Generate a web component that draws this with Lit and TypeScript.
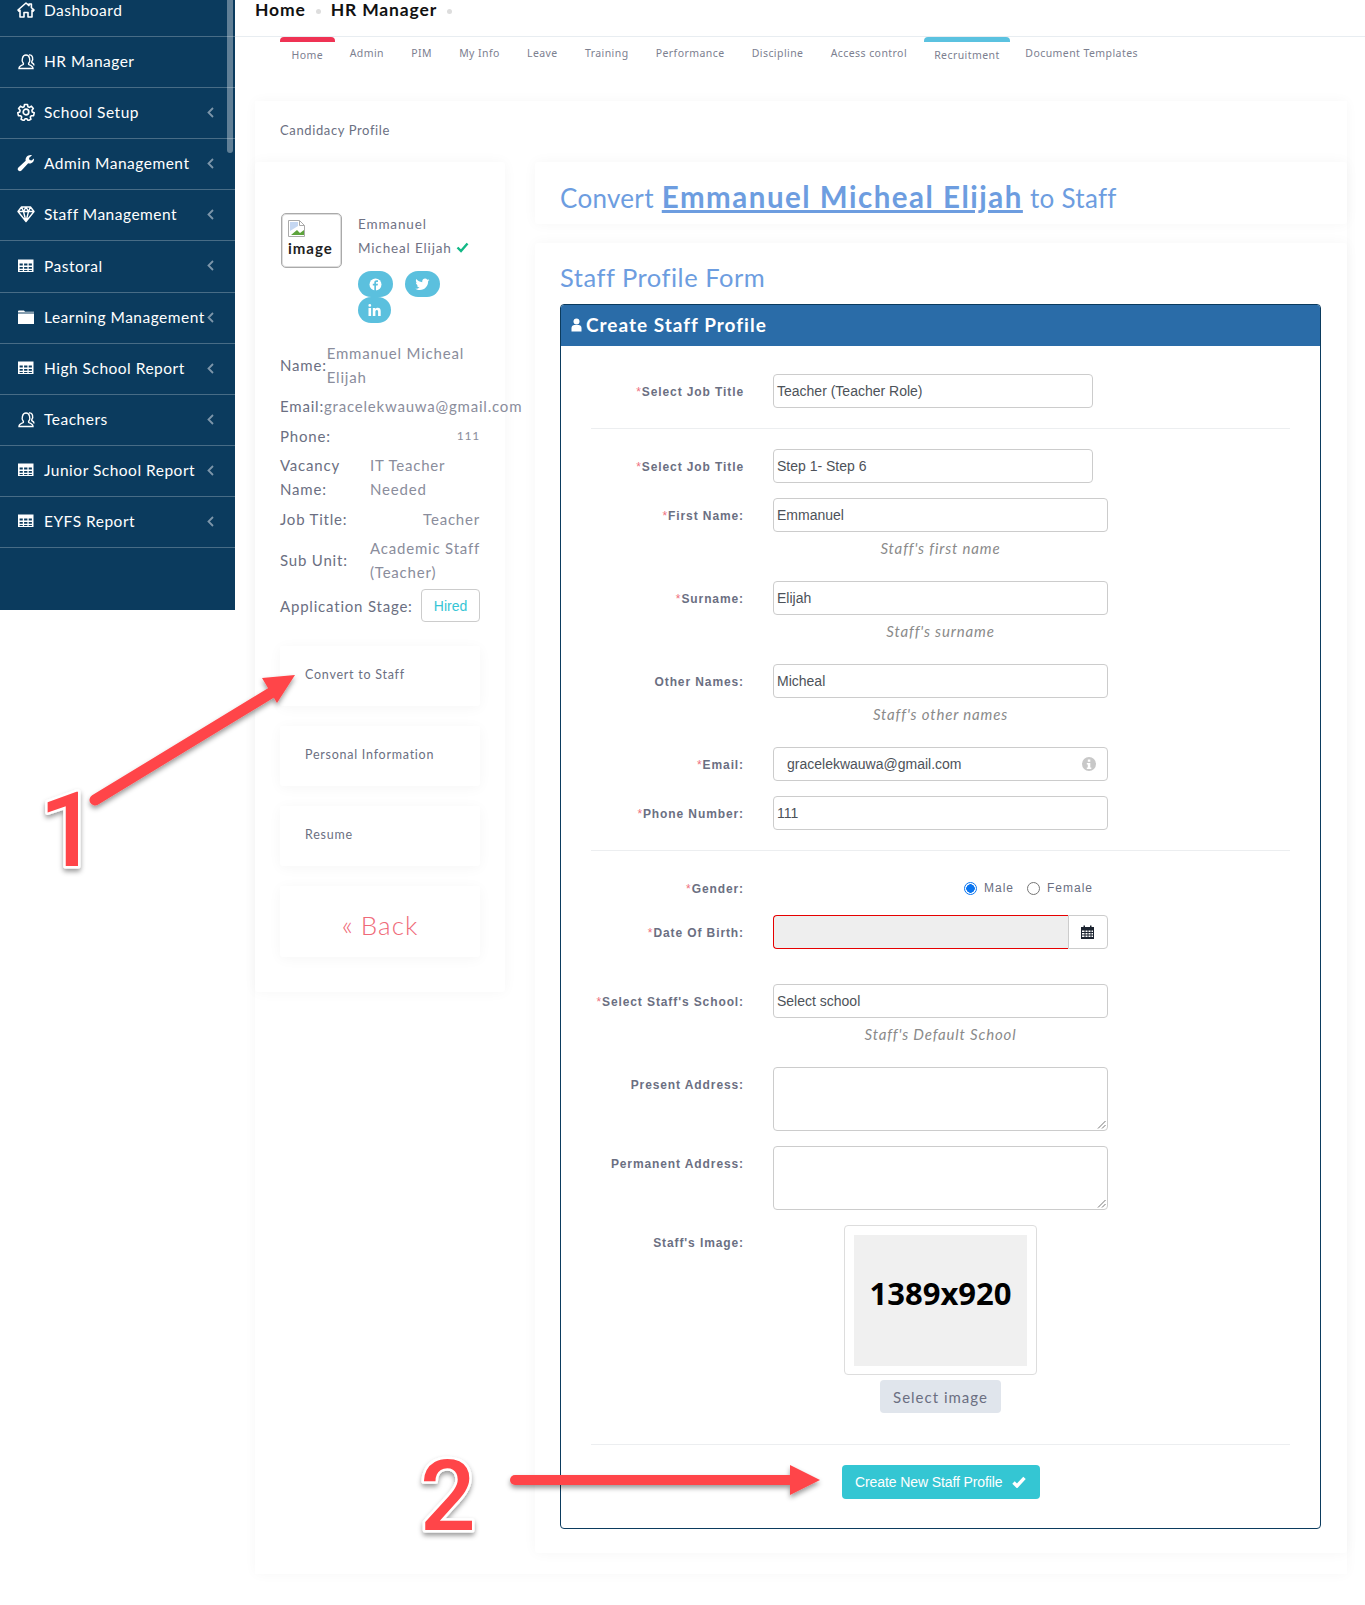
import { LitElement, html, css, svg } from "lit";
import { customElement } from "lit/decorators.js";

const ico = (c: unknown) => html`<svg class="ico" viewBox="0 0 18 18" width="18" height="18">${c}</svg>`;
const icons: Record<string, unknown> = {
  home: svg`<path d="M1 9 9 2l3 2.600V3h2.400v3.700L17 9l-1 1.200-1-.9V16h-4v-4.500H7V16H3V9.300l-1 .9z" fill="none" stroke="#fff" stroke-width="1.600" stroke-linejoin="round"/>`,
  users: svg`<path d="M2 16.500c0-2 1.800-3 4-3.800.600-.3.600-1.300 0-2C5 9.500 5 7.700 5.500 6c.5-2 2-3 3.500-3s3 1 3.500 3c.5 1.700.5 3.500-.5 4.700-.6.700-.6 1.700 0 2 2.200.8 4 1.800 4 3.800zM12 3c1.500-.5 3 .5 3.500 2.300.4 1.500.2 3-.6 4-.4.600-.2 1.400.4 1.700 1 .5 1.700 1.300 1.700 2.500" fill="none" stroke="#fff" stroke-width="1.400"/>`,
  cog: svg`<circle cx="9" cy="9" r="2.800" fill="none" stroke="#fff" stroke-width="1.700"/><path d="M7.500 1.500h3l.4 2.200 1.500.7 2-1.200 1.900 2.300-1.400 1.700.3 1.700 2 .9-.6 2.900-2.300.1-1 1.300.6 2.200-2.700 1.300-1.400-1.800h-1.600l-1.400 1.800-2.700-1.300.6-2.200-1-1.300-2.300-.1-.6-2.900 2-.9.3-1.700L1.600 5.500l1.900-2.300 2 1.200 1.600-.7z" fill="none" stroke="#fff" stroke-width="1.600" stroke-linejoin="round"/>`,
  wrench: svg`<path d="M17 4.500c.4 2.500-1.600 5-4.300 5-.6 0-1.100-.1-1.500-.3L4.500 16.500c-.9.9-2.300.9-3.100 0-.9-.8-.9-2.200 0-3.100l7.300-6.600C8 4 10.500 1 13.500 1c.6 0 1.100.1 1.500.3l-3 2.700.5 2 2 .5z" fill="#fff"/>`,
  gem: svg`<path d="M4.500 2h9L17 6.500 9 16.500 1 6.500zM1 6.500h16M6.500 6.500 9 16.500l2.500-10M4.500 2l2 4.500L9 2l2.500 4.500 2-4.500" fill="none" stroke="#fff" stroke-width="1.400" stroke-linejoin="round"/>`,
  table: svg`<path fill-rule="evenodd" d="M1 2.500h15.500v12.500H1zM2.600 6.500v2h3.200v-2zm4.500 0v2h3.300v-2zm4.600 0v2h3.200v-2zM2.600 10v1.800h3.200V10zm4.500 0v1.800h3.300V10zm4.600 0v1.800h3.200V10zM2.600 13v.9h3.200V13zm4.500 0v.9h3.300V13zm4.600 0v.9h3.200V13z" fill="#fff"/>`,
  folder: svg`<path d="M1 5.500h16V16H1zM1 4.600V3.500c0-.5.400-.9.900-.9H7l1 1.200h9v.8z" fill="#fff"/>`,
};

const menu = [
  ["Dashboard", "home", false], ["HR Manager", "users", false], ["School Setup", "cog", true],
  ["Admin Management", "wrench", true], ["Staff Management", "gem", true], ["Pastoral", "table", true],
  ["Learning Management", "folder", true], ["High School Report", "table", true], ["Teachers", "users", true],
  ["Junior School Report", "table", true], ["EYFS Report", "table", true],
] as [string, string, boolean][];

const tabs = ["Home", "Admin", "PIM", "My Info", "Leave", "Training", "Performance", "Discipline", "Access control", "Recruitment", "Document Templates"];

const grip = html`<svg class="grip" width="10" height="10" viewBox="0 0 10 10"><path d="M9.500 2 2 9.500M9.500 6 6 9.500" stroke="#777" fill="none"/></svg>`;

@customElement("app-root")
export class AppRoot extends LitElement {
  static styles = css`
    :host { display: block; position: relative; height: 1605px; overflow: hidden; background: #fff; font-family: "Lato", "Open Sans", sans-serif; color: #6b6f82; }
    * { box-sizing: border-box; }
    .page { display: grid; grid-template-columns: 235px 1fr; align-items: start; }
    .side { position: relative; background: #0b3b5e; height: 610px; color: #fff; }
    .item { height: 51px; display: flex; align-items: center; padding: 0 21px 2px 17px; border-bottom: 1px solid rgba(255,255,255,.25); font-size: 15.5px; letter-spacing: .5px; }
    .item:first-child { height: 37px; padding-bottom: 16px; }
    .item:nth-child(6) { height: 52px; }
    .ico { flex: none; margin-right: 9px; }
    .item .lbl { flex: 1; white-space: nowrap; }
    .chev { flex: none; }
    .thumb { position: absolute; right: 2px; top: 0; width: 6px; height: 153px; border-radius: 0 0 4px 4px; background: rgba(255,255,255,.35); }
    .top { height: 37px; border-bottom: 1px solid #e8edf1; padding-left: 20px; display: flex; align-items: flex-start; gap: 10px; font-size: 17.5px; font-weight: 700; color: #111; letter-spacing: .85px; line-height: 19px; }
    .dot { width: 5px; height: 5px; border-radius: 50%; background: #ddd; margin-top: 9px; }
    .tabs { height: 64px; display: flex; padding-left: 45px; font-family: "Noto Sans", sans-serif; font-size: 10.5px; letter-spacing: .43px; color: #7c8090; }
    .tab { padding: 9px 13.6px 0; height: 30px; white-space: nowrap; line-height: 14px; }
    .tab.on { padding: 6px 11.5px 0; border-top: 5px solid #ef3354; border-radius: 4px 4px 0 0; margin-right: 1.5px; }
    .tab.blue { border-top-color: #5bc2e0; margin-left: 3px; padding: 6px 10.5px 0; }
    .outer { margin: 0 18px 0 20px; height: 1473px; box-shadow: 0 0 12px rgba(0,0,0,.035); }
    .outer-h { height: 61px; padding: 20px 25px 0; font-size: 13px; color: #6b6f82; letter-spacing: .62px; line-height: 18px; }
    .cols { display: grid; grid-template-columns: 250px 812px; gap: 30px; align-items: start; }
    .card { background: #fff; box-shadow: 0 0 14px rgba(0,0,0,.04); border-radius: 3px; }
    .left { height: 830px; padding: 51px 25px 0; font-size: 15px; letter-spacing: .8px; line-height: 24px; color: #8a8d9c; }
    .who { display: flex; gap: 16px; margin-left: 1px; }
    .avatar { width: 61px; height: 55px; border: 1px solid #aaa; box-shadow: inset 0 0 0 1px #ddd; border-radius: 5px; padding: 6px 6px 0 6px; color: #222; font-weight: 700; font-size: 15px; line-height: 18px; letter-spacing: 1px; flex: none; }
    .avatar svg { display: block; margin-bottom: 2px; }
    .wname { font-size: 13.5px; color: #6f7285; line-height: 24px; margin-top: -1px; letter-spacing: .85px; }
    .socials { display: flex; flex-wrap: wrap; column-gap: 12px; width: 110px; margin-top: 11px; }
    .pill { width: 35px; height: 26px; border-radius: 14px; background: #5bc0de; display: flex; align-items: center; justify-content: center; }
    .pill.li { width: 33px; }
    .dl { margin-top: 18px; display: flex; flex-direction: column; gap: 5.4px; }
    .row { display: flex; justify-content: space-between; align-items: center; color: #6b6f82; }
    .row .v { color: #8a8d9c; }
    .r-name { justify-content: flex-start; }
    .r-email { justify-content: flex-start; white-space: nowrap; }
    .two .v { width: 110px; flex: none; white-space: nowrap; }
    .small { font-size: 12px; }
    .hired { width: 59px; height: 33px; border: 1px solid #ccc; border-radius: 4px; color: #36c5d5; font: 14px "Liberation Sans", sans-serif; letter-spacing: 0; display: flex; align-items: center; justify-content: center; }
    .links { margin-top: 24px; display: flex; flex-direction: column; gap: 20px; }
    .lnk { height: 60px; padding: 19px 25px 0; font-size: 12.5px; letter-spacing: .75px; line-height: 20px; color: #6b6f82; box-shadow: 0 2px 14px rgba(0,0,0,.04); border-radius: 3px; }
    .back { height: 71px; padding: 6px 0 0; display: flex; align-items: center; justify-content: center; font-size: 26px; color: #ef6a78; letter-spacing: 1px; font-weight: 300; }
    .back small { font-size: 28px; margin-right: 7px; }
    .right { display: flex; flex-direction: column; gap: 19px; }
    .title { height: 62px; padding: 16px 25px 0; font-size: 26px; letter-spacing: .3px; line-height: 38px; color: #6d9de0; white-space: nowrap; }
    .title b { font-size: 29.5px; font-weight: 700; letter-spacing: 1.5px; text-decoration: underline; text-decoration-thickness: 3px; margin: 0 7px 0 8px; }
    .formcard { height: 1310px; padding: 16px 26px 0 25px; }
    .fh { font-size: 25.5px; letter-spacing: .52px; color: #6d9de0; line-height: 36px; margin-bottom: 9px; }
    .panel { border: 1px solid #0b3b5e; border-radius: 4px; height: 1225px; overflow: hidden; font-family: "Liberation Sans", Arial, sans-serif; }
    .ph { height: 41px; background: #2a6ca8; color: #fff; display: flex; align-items: center; padding: 0 0 2px 10px; gap: 4px; font: 700 19px "Lato", sans-serif; letter-spacing: 1px; }
    .pb { padding-top: 28px; }
    .fr { display: flex; align-items: center; }
    .fr.top0 { align-items: flex-start; }
    .fr > label { width: 183px; flex: none; text-align: right; margin-right: 29px; padding-top: 1px; font-size: 12px; font-weight: 700; letter-spacing: .9px; color: #6b6f82; white-space: nowrap; }
    .fr.top0 > label { padding-top: 11px; }
    .req { color: #f0707e; font-weight: 400; }
    .inp { width: 335px; height: 34px; border: 1px solid #ccc; border-radius: 4px; padding: 0 3px; display: flex; align-items: center; font-size: 14px; color: #4d5259; background: #fff; }
    .inp.sel { width: 320px; }
    .inp.em { padding: 0 11px 0 13px; justify-content: space-between; }
    .inp.ta { height: 64px; position: relative; }
    .grip { position: absolute; right: 1px; bottom: 1px; }
    .help { margin: 6px 0 23px 212px; width: 335px; height: 20px; text-align: center; font: italic 15px/20px "Lato", sans-serif; letter-spacing: .85px; color: #8a8a8a; }
    .hr { height: 1px; background: #eceef0; margin: 20px 30px; }
    .hr.g { margin-bottom: 29px; }
    .hr.end { margin-bottom: 0; margin-top: 31px; }
    .g15 { margin-top: 15px; }
    .g18 { margin-top: 18px; }
    .g35 { margin-top: 35px; }
    .dob { display: flex; width: 335px; height: 34px; }
    .dob i { width: 295px; border: 1px solid #e60000; border-right: 0; background: #eee; border-radius: 4px 0 0 4px; }
    .dob span { width: 40px; border: 1px solid #ccc; border-radius: 0 4px 4px 0; padding: 0 0 0 12px; display: flex; align-items: center; }
    .radios { width: 320px; display: flex; justify-content: flex-end; align-items: center; font-size: 12px; letter-spacing: 1px; color: #6b6f82; height: 18px; margin-top: -1px; }
    .radio { width: 13px; height: 13px; border-radius: 50%; border: 1px solid #767676; margin-right: 7px; }
    .radio.on { border: 1.5px solid #0a75f0; background: radial-gradient(circle, #0a75f0 0 4px, #fff 4.5px); }
    .radio.f { margin-left: 13px; }
    .imgwrap { width: 193px; height: 150px; border: 1px solid #ddd; border-radius: 4px; padding: 9px; margin-left: 71px; }
    .ph-img { height: 131px; background: #f0f0f0; display: flex; align-items: center; justify-content: center; font: 700 31px "Open Sans", sans-serif; color: #000; padding-bottom: 16px; }
    .selbtn { width: 121px; height: 33px; margin: 5px 0 0 107px; background: #e0e5ec; border-radius: 4px; display: flex; align-items: center; justify-content: center; font: 15px "Lato", sans-serif; letter-spacing: 1px; color: #6b6f82; }
    .create { width: 198px; height: 34px; margin: 20px 0 0 281px; background: #34c6d3; border-radius: 4px; color: #fff; font-size: 14px; letter-spacing: -.1px; display: flex; align-items: center; padding-left: 13px; gap: 9px; white-space: nowrap; }
    .overlay { position: absolute; left: 0; top: 0; pointer-events: none; }
    .digit { font: 500 104px "Roboto", Arial, sans-serif; fill: #ff4548; stroke: #fff; stroke-width: 5px; paint-order: stroke; stroke-linejoin: round; }
    .digit2 { font-size: 98px; }
  `;

  private field(label: string, req: boolean, value: string, help: string) {
    return html`<div class="fr"><label>${req ? html`<span class="req">*</span>` : ""}${label}</label><div class="inp">${value}</div></div>
      <div class="help">${help}</div>`;
  }

  render() {
    return html`
      <div class="page">
        <nav class="side">
          ${menu.map(([t, i, c]) => html`<div class="item">${ico(icons[i])}<span class="lbl">${t}</span>${c ? html`<svg class="chev" width="7" height="11" viewBox="0 0 7 11"><path d="M6 1 1.500 5.500 6 10" fill="none" stroke="#7d96aa" stroke-width="1.800"/></svg>` : ""}</div>`)}
          <div class="thumb"></div>
        </nav>
        <main>
          <div class="top"><span>Home</span><i class="dot"></i><span>HR Manager</span><i class="dot"></i></div>
          <div class="tabs">${tabs.map((t, n) => html`<div class="tab ${n === 0 ? "on" : n === 9 ? "on blue" : ""}">${t}</div>`)}</div>
          <section class="outer">
            <div class="outer-h">Candidacy Profile</div>
            <div class="cols">
              <aside class="card left">
                <div class="who">
                  <div class="avatar"><svg width="18" height="17" viewBox="0 0 18 17"><path d="M.5.500h11l5 5v11H.5z" fill="#fff" stroke="#aaa"/><path d="M11.500.5v5h5" fill="none" stroke="#aaa"/><path d="M2 2h8v4l-8 5z" fill="#c5d7f2"/><path d="M3 15 9 10l3 3 4-3v5z" fill="#5da33c"/></svg>image</div>
                  <div>
                    <div class="wname">Emmanuel<br />Micheal Elijah <svg width="13" height="11" viewBox="0 0 13 11"><path d="M1.500 5.500 5 9l6.500-7.500" fill="none" stroke="#12b886" stroke-width="2.400"/></svg></div>
                    <div class="socials">
                      <span class="pill"><svg width="13" height="13" viewBox="0 0 13 13"><circle cx="6.500" cy="6.500" r="6" fill="#fff"/><path d="M7 13V7.500h1.600L9 5.700H7V4.800c0-.6.200-.9.900-.9H9V2.300C8.700 2.200 8.200 2.200 7.600 2.200 6.200 2.200 5.300 3 5.300 4.500v1.200H3.800v1.800h1.500V13z" fill="#5bc0de"/></svg></span>
                      <span class="pill"><svg width="15" height="13" viewBox="0 0 15 13"><path d="M14.500 2c-.5.200-1 .4-1.600.5.600-.4 1-.9 1.200-1.500-.5.300-1.100.6-1.800.7C11.800 1 11 .6 10.100.6 8.500.6 7.200 1.900 7.200 3.500c0 .2 0 .4.100.7C4.900 4.100 2.800 2.900 1.300 1.100 1 1.500.9 2 .9 2.600c0 1 .5 1.900 1.300 2.400-.5 0-.9-.1-1.300-.4 0 1.400 1 2.600 2.300 2.900-.4.100-.9.100-1.300 0 .4 1.200 1.500 2 2.700 2-1.200.9-2.800 1.400-4.300 1.200C1.600 11.600 3.200 12 4.800 12c5.300 0 8.300-4.500 8.300-8.300v-.4c.6-.4 1-.8 1.400-1.300z" fill="#fff"/></svg></span>
                      <span class="pill li"><svg width="13" height="12" viewBox="0 0 13 12"><path d="M.5 4h2.600v8H.5zM1.800 0a1.400 1.400 0 1 1 0 2.800 1.400 1.400 0 0 1 0-2.800zM4.800 4h2.500v1.100C7.700 4.400 8.500 3.800 9.700 3.800c2.500 0 3 1.600 3 3.800V12h-2.600V8c0-1 0-2-1.300-2s-1.400 1-1.400 2v4H4.800z" fill="#fff"/></svg></span>
                    </div>
                  </div>
                </div>
                <div class="dl">
                  <div class="row r-name"><span>Name:</span><span class="v">Emmanuel Micheal<br />Elijah</span></div>
                  <div class="row r-email"><span>Email:</span><span class="v">gracelekwauwa@gmail.com</span></div>
                  <div class="row"><span>Phone:</span><span class="v small">111</span></div>
                  <div class="row two"><span>Vacancy<br />Name:</span><span class="v">IT Teacher<br />Needed</span></div>
                  <div class="row"><span>Job Title:</span><span class="v">Teacher</span></div>
                  <div class="row two"><span>Sub Unit:</span><span class="v">Academic Staff<br />(Teacher)</span></div>
                  <div class="row"><span>Application Stage:</span><span class="hired">Hired</span></div>
                </div>
                <div class="links">
                  <div class="lnk">Convert to Staff</div>
                  <div class="lnk">Personal Information</div>
                  <div class="lnk">Resume</div>
                  <div class="lnk back"><span><small>«</small>Back</span></div>
                </div>
              </aside>
              <div class="right">
                <div class="card title">Convert<b>Emmanuel Micheal Elijah</b>to Staff</div>
                <div class="card formcard">
                  <div class="fh">Staff Profile Form</div>
                  <div class="panel">
                    <div class="ph"><svg width="11" height="14" viewBox="0 0 11 14"><circle cx="5.500" cy="3.500" r="3" fill="#fff"/><path d="M.5 13.500V10c0-2 1.500-3 3-3h4c1.500 0 3 1 3 3v3.500z" fill="#fff"/></svg>Create Staff Profile</div>
                    <div class="pb">
                      <div class="fr"><label><span class="req">*</span>Select Job Title</label><div class="inp sel">Teacher (Teacher Role)</div></div>
                      <div class="hr"></div>
                      <div class="fr"><label><span class="req">*</span>Select Job Title</label><div class="inp sel">Step 1- Step 6</div></div>
                      <div class="g15">
                        ${this.field("First Name:", true, "Emmanuel", "Staff's first name")}
                        ${this.field("Surname:", true, "Elijah", "Staff's surname")}
                        ${this.field("Other Names:", false, "Micheal", "Staff's other names")}
                      </div>
                      <div class="fr"><label><span class="req">*</span>Email:</label><div class="inp em"><span>gracelekwauwa@gmail.com</span><svg width="14" height="14" viewBox="0 0 14 14"><circle cx="7" cy="7" r="7" fill="#c8c8c8"/><rect x="5.800" y="2.500" width="2.500" height="2.300" fill="#fff"/><path d="M4.800 6h3.500v4.500h1V12H4.800v-1.500h1V7.400h-1z" fill="#fff"/></svg></div></div>
                      <div class="fr g15"><label><span class="req">*</span>Phone Number:</label><div class="inp">111</div></div>
                      <div class="hr g"></div>
                      <div class="fr"><label><span class="req">*</span>Gender:</label><div class="radios"><i class="radio on"></i>Male<i class="radio f"></i>Female</div></div>
                      <div class="fr g18"><label><span class="req">*</span>Date Of Birth:</label><div class="dob"><i></i><span><svg width="13" height="14" viewBox="0 0 13 14"><path fill-rule="evenodd" d="M0 2h2.500V.5h1.500V2h5V.5h1.500V2H13v12H0zM1 5.500v1.500h2.500V5.500zm3.500 0v1.500h2V5.500zm3 0v1.500h2V5.500zm3 0v1.500H12V5.500zM1 8v1.500h2.500V8zm3.500 0v1.500h2V8zm3 0v1.500h2V8zm3 0v1.500H12V8zM1 10.500V12h2.500v-1.500zm3.500 0V12h2v-1.500zm3 0V12h2v-1.500zm3 0V12H12v-1.500z" fill="#1c2430"/></svg></span></div></div>
                      <div class="fr g35"><label><span class="req">*</span>Select Staff's School:</label><div class="inp">Select school</div></div>
                      <div class="help">Staff's Default School</div>
                      <div class="fr top0"><label>Present Address:</label><div class="inp ta">${grip}</div></div>
                      <div class="fr top0 g15"><label>Permanent Address:</label><div class="inp ta">${grip}</div></div>
                      <div class="fr top0 g15"><label>Staff's Image:</label><div><div class="imgwrap"><div class="ph-img">1389x920</div></div><div class="selbtn">Select image</div></div></div>
                      <div class="hr end"></div>
                      <div class="create">Create New Staff Profile <svg width="14" height="12" viewBox="0 0 14 12"><path d="M1.500 6.500 5 10 12.500 1.800" fill="none" stroke="#fff" stroke-width="3.400"/></svg></div>
                    </div>
                  </div>
                </div>
              </div>
            </div>
          </section>
        </main>
      </div>
      <svg class="overlay" width="1365" height="1605" viewBox="0 0 1365 1605">
        <defs><filter id="sh" x="-20%" y="-20%" width="140%" height="150%"><feDropShadow dx="0" dy="3" stdDeviation="2.500" flood-color="#000" flood-opacity=".4"/></filter></defs>
        <g filter="url(#sh)">
          <path d="M95 800 279 688" stroke="#ff4548" stroke-width="11" stroke-linecap="round" fill="none"/>
          <path d="M262 678 295 675 277 703z" fill="#ff4548"/>
          <path d="M515 1480H795" stroke="#ff4548" stroke-width="10" stroke-linecap="round" fill="none"/>
          <path d="M790 1465 820 1480 790 1495z" fill="#ff4548"/>
          <text class="digit" x="39" y="866">1</text>
          <text class="digit digit2" x="420" y="1530">2</text>
        </g>
      </svg>
    `;
  }
}
